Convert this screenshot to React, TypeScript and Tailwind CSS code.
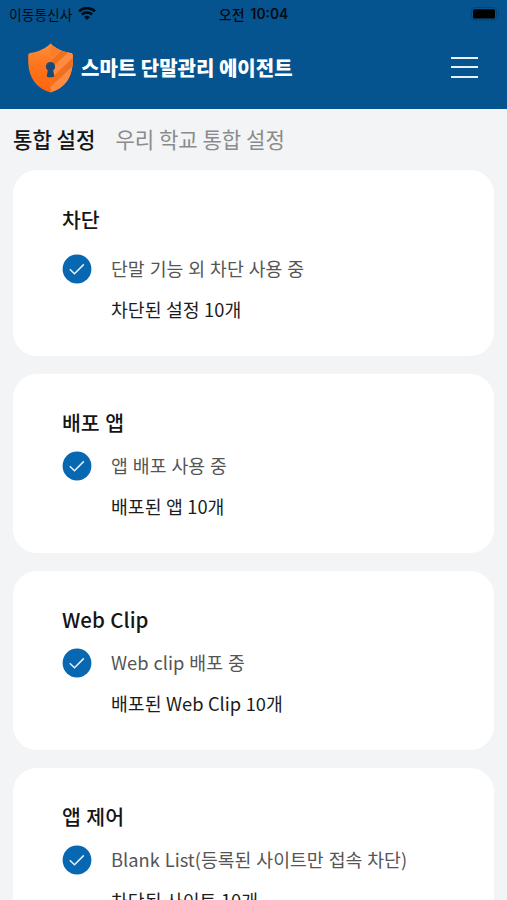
const cards = [
  {
    title: "차단",
    status: "단말 기능 외 차단 사용 중",
    summary: "차단된 설정 10개",
    spacing: "pt-[35px]",
    gap: "mt-[21px]",
  },
  {
    title: "배포 앱",
    status: "앱 배포 사용 중",
    summary: "배포된 앱 10개",
    spacing: "pt-[34px]",
    gap: "mt-[15px]",
  },
  {
    title: "Web Clip",
    status: "Web clip 배포 중",
    summary: "배포된 Web Clip 10개",
    spacing: "pt-[34px]",
    gap: "mt-[15px]",
  },
  {
    title: "앱 제어",
    status: "Blank List(등록된 사이트만 접속 차단)",
    summary: "차단된 사이트 10개",
    spacing: "pt-[34px]",
    gap: "mt-[15px]",
  },
];

const WifiIcon = () => (
  <svg width="18" height="13" viewBox="0 0 18 13" fill="none" stroke="#020a12">
    <path d="M1 4.3a11.6 11.6 0 0 1 16 0" strokeWidth="2.7" />
    <path d="M3.8 7.5a7.5 7.5 0 0 1 10.4 0" strokeWidth="2.5" />
    <path d="M6.2 10a4.2 4.2 0 0 1 5.6 0L9 13Z" fill="#020a12" stroke="none" />
  </svg>
);

const BatteryIcon = () => (
  <svg width="29" height="14" viewBox="0 0 29 14">
    <rect x="0.5" y="0.5" width="25" height="12.5" rx="3.5" fill="none" stroke="#044478" />
    <rect x="2" y="2.2" width="22" height="9.3" rx="1.5" fill="#000" />
    <path d="M27 4.7c1.6.7 1.6 3.5 0 4.2Z" fill="#044478" />
  </svg>
);

const ShieldLogo = () => (
  <svg width="45" height="50" viewBox="0 0 45 50">
    <defs>
      <linearGradient id="shieldLeft" x1="0" y1="0" x2="0" y2="1">
        <stop offset="0" stopColor="#ff8f3a" />
        <stop offset="0.45" stopColor="#fd741c" />
        <stop offset="1" stopColor="#ff650f" />
      </linearGradient>
      <linearGradient id="stripe" x1="1" y1="0" x2="0" y2="1">
        <stop offset="0" stopColor="#e96f25" />
        <stop offset="1" stopColor="#fa6f17" />
      </linearGradient>
      <clipPath id="shieldRight">
        <path d="M22.5.5C27 5 34 9 43 10c1.200.2 1.600 1 1.700 2C45.500 27 42.700 43 22.500 49.500Z" />
      </clipPath>
    </defs>
    <path
      d="M22.500.5C18 5 11 9 2 10c-1.200.2-1.600 1-1.700 2C-.5 27 2.300 43 22.500 49.500C42.700 43 45.500 27 44.700 12c-.1-1-.5-1.800-1.700-2C34 9 27 5 22.500.5Z"
      fill="url(#shieldLeft)"
    />
    <g clipPath="url(#shieldRight)">
      <path d="M22.500 0H45v50H22.500Z" fill="#ff8b40" />
      <path d="M22.500 0 32 7.500 22.500 17Z" fill="#fb7d27" />
      <path d="M22.500 18 34 7l6 2.500L22.500 26Z" fill="url(#stripe)" />
      <path d="M22.500 36 45 14.500v8.500L22.500 44Z" fill="url(#stripe)" />
    </g>
    <path
      d="M22.500 19a4.600 4.600 0 0 0-2.700 8.300L18.700 33.500q3.800 1.800 7.600 0l-1.100-6.200A4.600 4.600 0 0 0 22.500 19Z"
      fill="#174a78"
    />
  </svg>
);

const CheckIcon = () => (
  <svg width="30" height="30" viewBox="0 0 30 30" className="shrink-0">
    <circle cx="15" cy="15" r="14.4" fill="#0767b1" />
    <path
      d="M7.8 15.2l4.7 4.500 9.300-9.300"
      fill="none"
      stroke="#e8f3fb"
      strokeWidth="1.5"
    />
  </svg>
);

const Card = ({ title, status, summary, spacing, gap }: any) => (
  <section className={`rounded-[24px] bg-white pb-[33px] pl-[49px] ${spacing}`}>
    <h2 className="h-7 text-[20.5px] leading-7 font-medium [word-spacing:0.9px] text-[#151515]">
      {title}
    </h2>
    <div className={`flex h-[30px] items-center gap-[19px] ${gap}`}>
      <CheckIcon />
      <span className="pb-0.5 text-[18.3px] leading-7 [word-spacing:0.9px] text-[#555]">
        {status}
      </span>
    </div>
    <p className="mt-[11px] h-7 pl-[49px] text-[18.3px] leading-7 [word-spacing:0.4px] text-[#1c1c1c]">
      {summary}
    </p>
  </section>
);

export default function App() {
  return (
    <div className="h-[900px] w-full overflow-hidden bg-[#f2f4f6] font-['Noto_Sans_CJK_KR',sans-serif] whitespace-nowrap">
      <header className="h-[109px] bg-[#05548f]">
        <div className="grid h-[27px] grid-cols-[1fr_auto_1fr] items-center pr-[7px] pl-[9px] text-[#020a12]">
          <div className="flex items-center gap-1.5">
            <span className="text-[13.8px] leading-6">이동통신사</span>
            <WifiIcon />
          </div>
          <div className="flex items-center gap-1.5 pr-0.5 text-[14px] font-medium">
            <span className="leading-6">오전</span>
            <span className="pt-px font-['Inter',sans-serif] text-[13.8px] leading-6 font-semibold">
              10:04
            </span>
          </div>
          <div className="flex justify-end">
            <BatteryIcon />
          </div>
        </div>
        <div className="flex h-[82px] items-center pr-[29px] pl-7">
          <ShieldLogo />
          <h1 className="ml-2 text-[20px] leading-7 font-black text-white">
            스마트 단말관리 에이전트
          </h1>
          <button className="mb-0.5 ml-auto flex w-[27px] flex-col gap-[7.5px]">
            <span className="h-0.5 bg-[#e6f1fa]" />
            <span className="h-0.5 bg-[#e6f1fa]" />
            <span className="h-0.5 bg-[#e6f1fa]" />
          </button>
        </div>
      </header>

      <nav className="flex h-[61px] items-center gap-5 px-[13px] text-[21.1px]">
        <button className="font-medium text-[#151515]">통합 설정</button>
        <button className="text-[#8b8b8d]">우리 학교 통합 설정</button>
      </nav>

      <main className="flex flex-col gap-[18px] px-[13px]">
        {cards.map((card) => (
          <Card key={card.title} {...card} />
        ))}
      </main>
    </div>
  );
}
